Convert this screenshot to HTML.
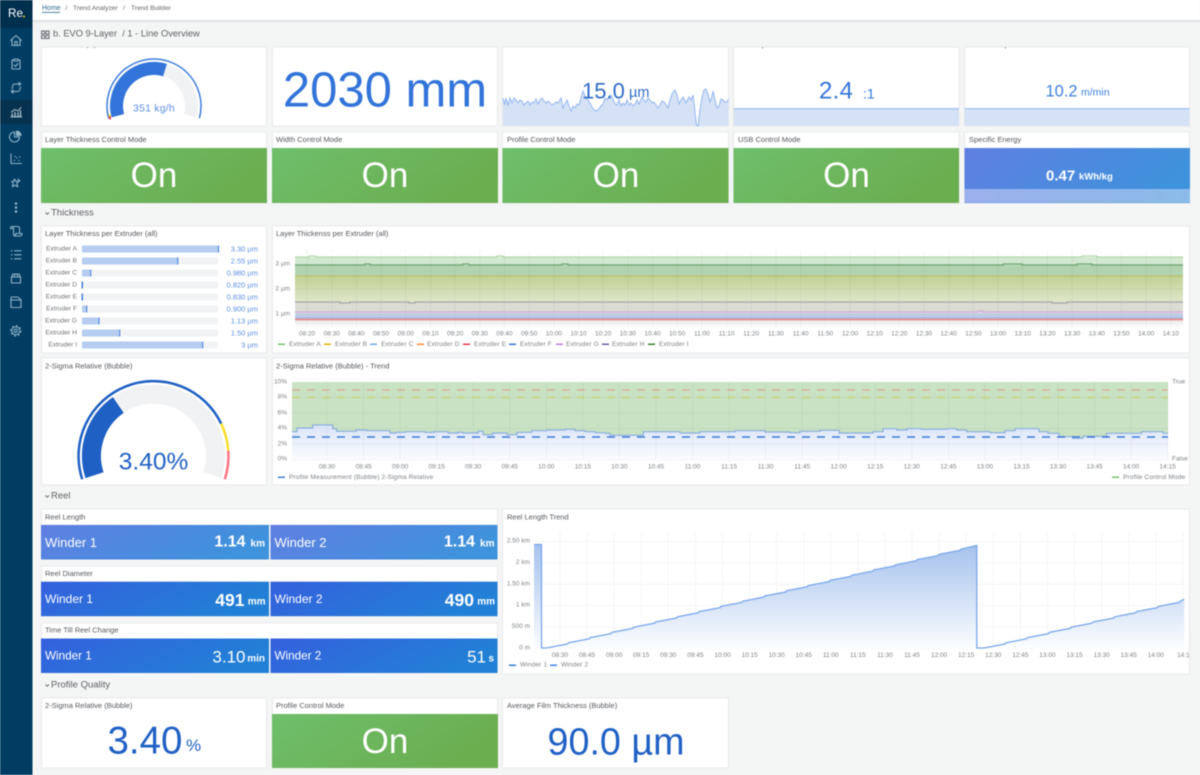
<!DOCTYPE html>
<html><head><meta charset="utf-8"><title>EVO 9-Layer</title>
<style>
html,body{margin:0;padding:0;width:1200px;height:775px;overflow:hidden;background:#f4f5f5}
svg{display:block;filter:blur(.4px)}
text{font-family:"Liberation Sans",sans-serif;dominant-baseline:central}
.t{font-size:7.5px;fill:#55585d}
.h{font-size:9.5px;fill:#5f6266}
.a{font-size:6.5px;fill:#7d8186}
.m{text-anchor:middle}.e{text-anchor:end}
.l{font-size:6.5px;fill:#7d8186;letter-spacing:.15px}
.on{font-size:35px;fill:#fff;text-anchor:middle}
.bl{font-size:6.5px;fill:#6d7075;text-anchor:end;letter-spacing:.05px}
.bv{font-size:7.5px;fill:#5b8fe2;text-anchor:end}
.p{fill:#fff;stroke:#e8eaec;stroke-width:1}
.ic{fill:none;stroke:#8db2c8;stroke-width:1.1;stroke-linecap:round;stroke-linejoin:round}
.w{fill:#fff;font-size:13px}.v{fill:#fff;font-size:17px;font-weight:bold}.u{fill:#fff;font-size:10px;font-weight:bold}
.g{stroke:rgba(0,0,0,.05);stroke-width:.8;fill:none}
</style></head>
<body>
<svg width="1200" height="775" viewBox="0 0 1200 775" xmlns="http://www.w3.org/2000/svg">
<defs>
<linearGradient id="gr" x1="0" y1="0" x2="1" y2=".35"><stop offset="0" stop-color="#6fbf6c"/><stop offset="1" stop-color="#6bae50"/></linearGradient>
<linearGradient id="b1" x1="0" y1="0" x2="1" y2=".3"><stop offset="0" stop-color="#5f7fe2"/><stop offset="1" stop-color="#3f92dc"/></linearGradient>
<linearGradient id="b2" x1="0" y1="0" x2="1" y2=".3"><stop offset="0" stop-color="#3560de"/><stop offset="1" stop-color="#2280d6"/></linearGradient>
<linearGradient id="se" x1="0" y1="0" x2="1" y2="0"><stop offset="0" stop-color="#9cb0ec"/><stop offset="1" stop-color="#8bbbe9"/></linearGradient>
<linearGradient id="c3" gradientUnits="userSpaceOnUse" x1="0" y1="276" x2="0" y2="302"><stop offset="0" stop-color="#c0d196"/><stop offset="1" stop-color="#dfe6c9"/></linearGradient>
<linearGradient id="c5" gradientUnits="userSpaceOnUse" x1="0" y1="319" x2="0" y2="328"><stop offset="0" stop-color="#e6e6e6"/><stop offset="1" stop-color="#fff"/></linearGradient>
<linearGradient id="t2" gradientUnits="userSpaceOnUse" x1="0" y1="430" x2="0" y2="460"><stop offset="0" stop-color="#dfe8f9"/><stop offset="1" stop-color="#fbfcfe"/></linearGradient>
<linearGradient id="t3" gradientUnits="userSpaceOnUse" x1="0" y1="544" x2="0" y2="648"><stop offset="0" stop-color="#a5c1ec"/><stop offset="1" stop-color="#fbfdff"/></linearGradient>
</defs>

<!-- background -->
<rect width="1200" height="775" fill="#f4f5f5"/>
<rect width="1200" height="20" fill="#fff"/>
<rect y="20" width="1200" height="2" fill="#dfe2e6"/>
<text x="42" y="8.500" font-size="7px" fill="#2d6b8c">Home</text>
<rect x="42" y="12" width="18" height=".8" fill="#2d6b8c"/>
<text x="65.500" y="8.500" font-size="6.700px" fill="#666">/</text>
<text x="73" y="8.500" font-size="6.700px" fill="#666">Trend Analyzer</text>
<text x="123" y="8.500" font-size="6.700px" fill="#666">/</text>
<text x="131" y="8.500" font-size="6.700px" fill="#666">Trend Builder</text>

<g fill="none" stroke="#66696e" stroke-width="1"><rect x="41.500" y="31" width="3" height="3"/><rect x="46" y="31" width="3" height="3"/><rect x="41.500" y="35.500" width="3" height="3"/><rect x="46" y="35.500" width="3" height="3"/></g>
<text x="53" y="33.500" style="font-size:9.300px;fill:#5f6266;white-space:pre">b. EVO 9-Layer  / 1 - Line Overview</text>

<!-- sidebar -->
<rect width="32.500" height="775" fill="#013d62"/>
<rect width="32.500" height="28" fill="#012f4e"/>
<rect y="100" width="32.500" height="24" fill="#07324f"/>
<text x="8" y="13" font-size="12px" fill="#fff" textLength="15" lengthAdjust="spacingAndGlyphs">Re</text>
<circle cx="24" cy="16.500" r="1" fill="#f2c230"/>
<!-- home -->
<path class="ic" d="M10.500 40.500 16 35.500 21.500 40.500M12 39.500V45.500H20V39.500M14.800 45.500V41.500H17.200V45.500"/>
<!-- clipboard check -->
<path class="ic" d="M14 60H12V69H20V60H18M14 59H18V61H14ZM14 65 15.500 66.500 18 63.500"/>
<!-- sync -->
<path class="ic" d="M12 88.500 12.800 85.500Q13.300 84 15 84H20.500M18.800 82.500 20.800 84 19 85.500M20.500 87 19.700 90Q19.200 91.500 17.500 91.500H11.500M13.300 90 11.300 91.500 13.300 93"/>
<!-- chart active -->
<path class="ic" style="stroke:#9db6c6;stroke-width:1.400" d="M11 116.800H21.500M12.200 116V114M15 116V112.500M18 116V113M20.500 116V111"/>
<path class="ic" style="stroke:#9db6c6" d="M11.500 112 15 109.500 18 111 21 107.500"/>
<!-- pie -->
<path class="ic" d="M14.500 132A5 5 0 1 0 19.500 137H14.500Z"/>
<path class="ic" style="fill:#8db2c8" d="M16.500 131A4.500 4.500 0 0 1 21 135.500H16.500Z"/>
<!-- scatter -->
<path class="ic" d="M11 154V163.500H21.500M14 160.500H14.500M16.500 158H17M18.500 160.500H19M15 156.500H15.500M19.500 157H20"/>
<!-- star -->
<path class="ic" d="M14.500 179 15.700 181.200H19L16.800 183.200 17.800 186.800 14.500 185 12.500 186.800 13 183.200 11.800 181.500H13.500ZM18 179 20 181"/>
<!-- dots -->
<g fill="#8db2c8"><circle cx="16" cy="203.500" r="1.300"/><circle cx="16" cy="207.500" r="1.300"/><circle cx="16" cy="211.500" r="1.300"/></g>
<!-- scroll -->
<path class="ic" d="M13 226.500H18Q19.500 226.500 19.500 228V232.500M10.500 228.500Q10.500 226.500 12 226.500Q13.500 226.500 13.500 228V234Q13.500 236 15.500 236H20Q22 236 22 233.500H15.500V234.500Q15.500 236 14 236M10.500 228.500H13.500"/>
<!-- list -->
<path class="ic" d="M14.500 250.800H21M14.500 254.800H21M14.500 258.800H21M11.300 250.800H12M11.300 254.800H12M11.300 258.800H12"/>
<!-- box -->
<path class="ic" d="M11.500 277V283H20.500V277M11.500 277 13 274H19L20.500 277ZM14.500 274V277M17.500 274V277"/>
<!-- folder -->
<path class="ic" d="M11 300V307.500H21V300ZM11 300V298Q11 297 12 297H18L21 300"/>
<!-- gear -->
<circle class="ic" cx="15.800" cy="330.800" r="4"/>
<circle cx="15.800" cy="330.800" r="5.200" fill="none" stroke="#8db2c8" stroke-width="1.200" stroke-dasharray="1.600 2.484"/>
<circle class="ic" cx="15.800" cy="330.800" r="1.600"/>

<!-- ROW 1 -->
<rect class="p" x="41.500" y="47" width="225" height="79"/>
<rect class="p" x="272.500" y="47" width="225" height="79"/>
<rect class="p" x="502.500" y="47" width="226" height="79"/>
<rect class="p" x="733.500" y="47" width="225.500" height="79"/>
<rect class="p" x="964.500" y="47" width="225" height="79"/>
<rect x="87" y="47" width="1" height="1" fill="#888"/><rect x="94" y="47" width="1" height="1" fill="#888"/>
<rect x="762" y="47" width="1" height="1.500" fill="#888"/><rect x="1005" y="47" width="1" height="1.500" fill="#888"/>

<!-- gauge 1 -->
<path d="M117.800 115.700A37.500 37.500 0 1 1 190.200 115.700" fill="none" stroke="#f1f2f3" stroke-width="13"/>
<path d="M117.800 115.700A37.500 37.500 0 0 1 165 70.100" fill="none" stroke="#3274d9" stroke-width="13"/>
<path d="M108.600 118.200A47 47 0 1 1 199.400 118.200" fill="none" stroke="#3e7ddc" stroke-width="1.500"/>
<rect x="108.500" y="114.500" width="2" height="2" fill="#f2cc0c"/><rect x="109" y="116.500" width="2" height="3" fill="#e8485a"/>
<text x="154" y="108.500" class="m" font-size="10.500px" fill="#5b8ee6" style="letter-spacing:.2px">351 kg/h</text>

<text x="385" y="90.500" class="m" font-size="49px" fill="#3274d9">2030 mm</text>

<!-- sparkline -->
<path d="M503 98 504.500 105 506 98 508 105 510 98 512 103 514 98 516 100 518 103 520 100 522 101 524 105 526 103 528 101 530 105 532 102 534 103 536 99 538 104 540 100 542 98 544 101 546 103 548 101 550 103 552 105 554 104 556 102 558 103 561 98 563 108 565 104 567 100 569 106 571 111 573 106 575 108 577 104 579 105 583 91 585 96 588 100 590 103 592 107 594 110 596 111 598 110 601 106 603 104 605 98 607 100 609 96 611 95 613 99 615 104 617 105 619 100 621 106 623 103 625 105 627 100 629 105 631 103 633 106 635 104 637 100 639 104 642 97 644 100 646 102 648 98 650 100 652 103 654 102 656 105 658 108 660 105 662 101 665 103 668 108 670 100 672 94 675 90 677 95 679 104 681 100 683 97 686 103 689 97 691 100 693 95 695 112 696.500 125 698 126 700 110 702 98 704 90 706 89 708 94 710 102 711.500 98 713 91 715 100 717 108 719 106 721 99 723 100 725 102 727 102 728.500 99V126H503Z" fill="#d5e2f5" stroke="none"/>
<path d="M503 98 504.500 105 506 98 508 105 510 98 512 103 514 98 516 100 518 103 520 100 522 101 524 105 526 103 528 101 530 105 532 102 534 103 536 99 538 104 540 100 542 98 544 101 546 103 548 101 550 103 552 105 554 104 556 102 558 103 561 98 563 108 565 104 567 100 569 106 571 111 573 106 575 108 577 104 579 105 583 91 585 96 588 100 590 103 592 107 594 110 596 111 598 110 601 106 603 104 605 98 607 100 609 96 611 95 613 99 615 104 617 105 619 100 621 106 623 103 625 105 627 100 629 105 631 103 633 106 635 104 637 100 639 104 642 97 644 100 646 102 648 98 650 100 652 103 654 102 656 105 658 108 660 105 662 101 665 103 668 108 670 100 672 94 675 90 677 95 679 104 681 100 683 97 686 103 689 97 691 100 693 95 695 112 696.500 125 698 126 700 110 702 98 704 90 706 89 708 94 710 102 711.500 98 713 91 715 100 717 108 719 106 721 99 723 100 725 102 727 102 728.500 99" fill="none" stroke="#94b6ee" stroke-width="1"/>
<text x="582" y="91" font-size="22px" fill="#2f6bc8">15.0</text><text x="629" y="93" font-size="14.500px" fill="#2f6bc8">µm</text>

<rect x="734" y="108" width="225" height="18" fill="#d5e2f5"/><rect x="734" y="108" width="225" height="1.500" fill="#aac4ee"/>
<text x="819" y="91" font-size="24px" fill="#3274d9" style="letter-spacing:.3px">2.4</text><text x="863" y="93.500" font-size="14px" fill="#3274d9">:1</text>
<rect x="964.500" y="108" width="225" height="18" fill="#d5e2f5"/><rect x="964.500" y="108" width="225" height="1.500" fill="#aac4ee"/>
<text x="1045.500" y="91.500" font-size="16.500px" fill="#3f7fdf">10.2</text><text x="1081" y="92.500" font-size="10.500px" fill="#3f7fdf">m/min</text>

<!-- ROW 2 -->
<rect class="p" x="41.500" y="132" width="225" height="71"/><text x="45" y="139.500" class="t">Layer Thickness Control Mode</text>
<rect x="41" y="148" width="226" height="55" fill="url(#gr)"/><text x="154" y="175.500" class="on">On</text>
<rect class="p" x="272.500" y="132" width="225" height="71"/><text x="276" y="139.500" class="t">Width Control Mode</text>
<rect x="272" y="148" width="226" height="55" fill="url(#gr)"/><text x="385" y="175.500" class="on">On</text>
<rect class="p" x="502.500" y="132" width="226" height="71"/><text x="507" y="139.500" class="t">Profile Control Mode</text>
<rect x="502.500" y="148" width="226" height="55" fill="url(#gr)"/><text x="616" y="175.500" class="on">On</text>
<rect class="p" x="733.500" y="132" width="225.500" height="71"/><text x="738" y="139.500" class="t">USB Control Mode</text>
<rect x="733.500" y="148" width="225.500" height="55" fill="url(#gr)"/><text x="846.500" y="175.500" class="on">On</text>
<rect class="p" x="964.500" y="132" width="225" height="71"/><text x="969" y="139.500" class="t">Specific Energy</text>
<rect x="964.500" y="148" width="225.500" height="55" fill="url(#b1)"/>
<rect x="964.500" y="189" width="225.500" height="13.500" fill="url(#se)"/>
<text x="1046" y="176" font-size="15px" font-weight="bold" fill="#fff">0.47</text><text x="1079" y="177" font-size="9.500px" font-weight="bold" fill="#fff">kWh/kg</text>

<!-- Thickness header -->
<path d="M45.500 212.500 47.200 214.200 49 212.500" fill="none" stroke="#666" stroke-width=".9"/>
<text x="51" y="213" class="h">Thickness</text>

<!-- ROW 3 -->
<rect class="p" x="41.500" y="226" width="225" height="127"/>
<text x="45" y="233.500" class="t">Layer Thickness per Extruder (all)</text>
<g fill="#f2f3f4">
<rect x="82" y="245.500" width="136" height="7"/><rect x="82" y="257.500" width="136" height="7"/><rect x="82" y="269.500" width="136" height="7"/><rect x="82" y="281.500" width="136" height="7"/><rect x="82" y="293.500" width="136" height="7"/><rect x="82" y="305.500" width="136" height="7"/><rect x="82" y="317.500" width="136" height="7"/><rect x="82" y="329.500" width="136" height="7"/><rect x="82" y="341.500" width="136" height="7"/>
</g>
<g fill="#b6cdf1">
<rect x="82" y="245.500" width="136.500" height="7"/><rect x="82" y="257.500" width="95.700" height="7"/><rect x="82" y="269.500" width="8.700" height="7"/><rect x="82" y="281.500" width="1" height="7"/><rect x="82" y="293.500" width="1" height="7"/><rect x="82" y="305.500" width="4.700" height="7"/><rect x="82" y="317.500" width="17" height="7"/><rect x="82" y="329.500" width="37.700" height="7"/><rect x="82" y="341.500" width="120.700" height="7"/>
</g>
<g fill="#3e7edd">
<rect x="218" y="245.500" width="1" height="7"/><rect x="177.300" y="257.500" width="1" height="7"/><rect x="90.200" y="269.500" width="1" height="7"/><rect x="81.500" y="281.500" width="1.500" height="7"/><rect x="81.500" y="293.500" width="1.500" height="7"/><rect x="86.200" y="305.500" width="1" height="7"/><rect x="98.500" y="317.500" width="1" height="7"/><rect x="119.200" y="329.500" width="1" height="7"/><rect x="202.200" y="341.500" width="1" height="7"/>
</g>
<text x="77" y="249" class="bl">Extruder A</text><text x="258" y="249" class="bv">3.30 µm</text>
<text x="77" y="261" class="bl">Extruder B</text><text x="258" y="261" class="bv">2.55 µm</text>
<text x="77" y="273" class="bl">Extruder C</text><text x="258" y="273" class="bv">0.980 µm</text>
<text x="77" y="285" class="bl">Extruder D</text><text x="258" y="285" class="bv">0.820 µm</text>
<text x="77" y="297" class="bl">Extruder E</text><text x="258" y="297" class="bv">0.830 µm</text>
<text x="77" y="309" class="bl">Extruder F</text><text x="258" y="309" class="bv">0.900 µm</text>
<text x="77" y="321" class="bl">Extruder G</text><text x="258" y="321" class="bv">1.13 µm</text>
<text x="77" y="333" class="bl">Extruder H</text><text x="258" y="333" class="bv">1.50 µm</text>
<text x="77" y="345" class="bl">Extruder I</text><text x="258" y="345" class="bv">3 µm</text>

<rect class="p" x="272.500" y="226" width="917" height="127"/>
<text x="276" y="233.500" class="t">Layer Thickenss per Extruder (all)</text>
<rect x="295" y="257" width="888" height="8" fill="#d3e8d0"/>
<rect x="295" y="265" width="888" height="11" fill="#b1d3b0"/>
<rect x="295" y="276" width="888" height="26" fill="url(#c3)"/>
<rect x="295" y="302" width="888" height="10" fill="#dbdcd4"/>
<rect x="295" y="312" width="888" height="3" fill="#d8d6e2"/>
<rect x="295" y="314.500" width="888" height="4.500" fill="#a9c2e4"/>
<rect x="295" y="319" width="888" height="9" fill="url(#c5)"/>
<path class="g" d="M307 250V328M331.700 250V328M356.400 250V328M381 250V328M405.700 250V328M430.400 250V328M455.100 250V328M479.800 250V328M504.400 250V328M529.100 250V328M553.800 250V328M578.500 250V328M603.200 250V328M627.800 250V328M652.500 250V328M677.200 250V328M701.900 250V328M726.600 250V328M751.200 250V328M775.900 250V328M800.600 250V328M825.300 250V328M850 250V328M874.600 250V328M899.300 250V328M924 250V328M948.700 250V328M973.400 250V328M998 250V328M1022.700 250V328M1047.400 250V328M1072.100 250V328M1096.800 250V328M1121.400 250V328M1146.100 250V328M1170.800 250V328M295 264H1183M295 289H1183M295 314H1183"/>
<g fill="none" stroke-width="1">
<path stroke="#a6d3a0" d="M295 257H309V256H316V257H497V256H503V257H1082V256H1097V257H1183"/>
<path stroke="#6fa672" stroke-width="1.200" d="M295 265H365V264H370V265H463V264H469V265H562V264H568V265H1003V264H1022V265H1077V264H1092V265H1183"/>
<path stroke="#c0bc62" d="M295 276H1183"/>
<path stroke="#a5a5a8" stroke-width="1.200" d="M295 302H340V303H350V302H409V303H415V302H1052V303H1067V302H1183"/>
<path stroke="#cfaeda" stroke-width="1.200" d="M295 312H978V311H983V312H1183"/>
<path stroke="#c7d6ef" stroke-width="1.200" d="M295 316H1183"/>
<path stroke="#ef7f78" stroke-width="1.400" d="M295 319.500H1183"/>
</g>
<g class="a">
<text x="290" y="264" class="a e">3 µm</text><text x="290" y="289" class="a e">2 µm</text><text x="290" y="314" class="a e">1 µm</text>
<text x="307" y="334" class="a m">08:20</text><text x="331.700" y="334" class="a m">08:30</text><text x="356.400" y="334" class="a m">08:40</text><text x="381" y="334" class="a m">08:50</text><text x="405.700" y="334" class="a m">09:00</text><text x="430.400" y="334" class="a m">09:10</text><text x="455.100" y="334" class="a m">09:20</text><text x="479.800" y="334" class="a m">09:30</text><text x="504.400" y="334" class="a m">09:40</text><text x="529.100" y="334" class="a m">09:50</text><text x="553.800" y="334" class="a m">10:00</text><text x="578.500" y="334" class="a m">10:10</text><text x="603.200" y="334" class="a m">10:20</text><text x="627.800" y="334" class="a m">10:30</text><text x="652.500" y="334" class="a m">10:40</text><text x="677.200" y="334" class="a m">10:50</text><text x="701.900" y="334" class="a m">11:00</text><text x="726.600" y="334" class="a m">11:10</text><text x="751.200" y="334" class="a m">11:20</text><text x="775.900" y="334" class="a m">11:30</text><text x="800.600" y="334" class="a m">11:40</text><text x="825.300" y="334" class="a m">11:50</text><text x="850" y="334" class="a m">12:00</text><text x="874.600" y="334" class="a m">12:10</text><text x="899.300" y="334" class="a m">12:20</text><text x="924" y="334" class="a m">12:30</text><text x="948.700" y="334" class="a m">12:40</text><text x="973.400" y="334" class="a m">12:50</text><text x="998" y="334" class="a m">13:00</text><text x="1022.700" y="334" class="a m">13:10</text><text x="1047.400" y="334" class="a m">13:20</text><text x="1072.100" y="334" class="a m">13:30</text><text x="1096.800" y="334" class="a m">13:40</text><text x="1121.400" y="334" class="a m">13:50</text><text x="1146.100" y="334" class="a m">14:00</text><text x="1170.800" y="334" class="a m">14:10</text>
</g>
<rect x="278" y="343.500" width="7" height="1.500" fill="#73bf69"/><text x="289" y="344.500" class="l">Extruder A</text>
<rect x="324" y="343.500" width="7" height="1.500" fill="#e0b400"/><text x="335" y="344.500" class="l">Extruder B</text>
<rect x="370" y="343.500" width="7" height="1.500" fill="#6ea6f0"/><text x="381" y="344.500" class="l">Extruder C</text>
<rect x="417" y="343.500" width="7" height="1.500" fill="#ff8833"/><text x="427" y="344.500" class="l">Extruder D</text>
<rect x="463" y="343.500" width="7" height="1.500" fill="#e8384f"/><text x="474" y="344.500" class="l">Extruder E</text>
<rect x="509" y="343.500" width="7" height="1.500" fill="#3274d9"/><text x="520" y="344.500" class="l">Extruder F</text>
<rect x="556" y="343.500" width="7" height="1.500" fill="#b877d9"/><text x="566" y="344.500" class="l">Extruder G</text>
<rect x="602" y="343.500" width="7" height="1.500" fill="#705da0"/><text x="612" y="344.500" class="l">Extruder H</text>
<rect x="648" y="343.500" width="7" height="1.500" fill="#37872d"/><text x="659" y="344.500" class="l">Extruder I</text>

<!-- ROW 4 -->
<rect class="p" x="41.500" y="358" width="225" height="127"/>
<text x="45" y="366" class="t">2-Sigma Relative (Bubble)</text>
<path d="M94.500 475.200A62 62 0 1 1 212.500 475.200" fill="none" stroke="#f1f2f3" stroke-width="19"/>
<path d="M94.500 475.200A62 62 0 0 1 118.300 405" fill="none" stroke="#1f60c4" stroke-width="19"/>
<path d="M82.200 479.200A75 75 0 0 1 221.200 423.700" fill="none" stroke="#1f60c4" stroke-width="2.500"/>
<path d="M221.200 423.700A75 75 0 0 1 228.300 450.800" fill="none" stroke="#fade2a" stroke-width="2.500"/>
<path d="M228.300 450.800A75 75 0 0 1 224.800 479.200" fill="none" stroke="#ff7383" stroke-width="2.500"/>
<text x="153.500" y="462" class="m" font-size="24.500px" fill="#1f60c4">3.40%</text>

<rect class="p" x="272.500" y="358" width="917" height="127"/>
<text x="276" y="366" class="t">2-Sigma Relative (Bubble) - Trend</text>
<rect x="292" y="382" width="876" height="55" fill="#c9e2c4"/>
<rect x="292" y="425" width="876" height="35" fill="url(#t2)"/>
<path d="M292 382V431.700H297V428H312.700V425H332.700V428.700H336.700V431.300H356V430H366.700V430.700H390V433H396V432.300H405V431.700H425V432.300H434V431.700H448V433H458V432.300H463V433H478V431.300H483V434.700H492.700V433H507V434.700H517V432.300H531.700V430.700H546.700V430H565V429.300H575V430.700H585V431.700H595V432.700H605V433.300H610V435.300H643.300V431.700H680V433H700V431.700H735V430.700H765V432H790V432.700H800V431.300H820V430.300H839.300V433H873V431.700H883V428.700H896.700V430H907V428.700H921.700V429.300H946.700V428.700H956.700V430H966.700V431.700H990V432.700H1005V430.700H1015V428.700H1039V431.700H1048V433.300H1059V436.700H1072.700V438.300H1083V436.300H1106.700V433.300H1141.700V431.700H1163V433.300H1168V382Z" fill="#c9e2c4"/>
<path class="g" d="M327 382V460M363.600 382V460M400.100 382V460M436.700 382V460M473.200 382V460M509.800 382V460M546.300 382V460M582.900 382V460M619.400 382V460M656 382V460M692.500 382V460M729.100 382V460M765.600 382V460M802.200 382V460M838.700 382V460M875.300 382V460M911.800 382V460M948.400 382V460M984.900 382V460M1021.500 382V460M1058 382V460M1094.600 382V460M1131.100 382V460M1167.700 382V460M292 397.500H1168M292 413H1168M292 428.500H1168M292 444H1168M292 460H1168"/>
<path d="M292 431.700H297V428H312.700V425H332.700V428.700H336.700V431.300H356V430H366.700V430.700H390V433H396V432.300H405V431.700H425V432.300H434V431.700H448V433H458V432.300H463V433H478V431.300H483V434.700H492.700V433H507V434.700H517V432.300H531.700V430.700H546.700V430H565V429.300H575V430.700H585V431.700H595V432.700H605V433.300H610V435.300H643.300V431.700H680V433H700V431.700H735V430.700H765V432H790V432.700H800V431.300H820V430.300H839.300V433H873V431.700H883V428.700H896.700V430H907V428.700H921.700V429.300H946.700V428.700H956.700V430H966.700V431.700H990V432.700H1005V430.700H1015V428.700H1039V431.700H1048V433.300H1059V436.700H1072.700V438.300H1083V436.300H1106.700V433.300H1141.700V431.700H1163V433.300H1168" fill="none" stroke="#8aadde" stroke-width="1.200"/>
<path d="M292 390H1168" stroke="#dba88e" stroke-width="1.300" stroke-dasharray="8 7"/>
<path d="M292 397.500H1168" stroke="#c9d06e" stroke-width="1.300" stroke-dasharray="8 7"/>
<path d="M292 437H1168" stroke="#3f7bd6" stroke-width="1.600" stroke-dasharray="8 7"/>
<text x="287" y="382" class="a e">10%</text><text x="287" y="397" class="a e">8%</text><text x="287" y="413" class="a e">6%</text><text x="287" y="428" class="a e">4%</text><text x="287" y="444" class="a e">2%</text><text x="287" y="459" class="a e">0%</text>
<text x="1172" y="382" class="a">True</text><text x="1172" y="459" class="a">False</text>
<text x="327" y="467" class="a m">08:30</text><text x="363.600" y="467" class="a m">08:45</text><text x="400.100" y="467" class="a m">09:00</text><text x="436.700" y="467" class="a m">09:15</text><text x="473.200" y="467" class="a m">09:30</text><text x="509.800" y="467" class="a m">09:45</text><text x="546.300" y="467" class="a m">10:00</text><text x="582.900" y="467" class="a m">10:15</text><text x="619.400" y="467" class="a m">10:30</text><text x="656" y="467" class="a m">10:45</text><text x="692.500" y="467" class="a m">11:00</text><text x="729.100" y="467" class="a m">11:15</text><text x="765.600" y="467" class="a m">11:30</text><text x="802.200" y="467" class="a m">11:45</text><text x="838.700" y="467" class="a m">12:00</text><text x="875.300" y="467" class="a m">12:15</text><text x="911.800" y="467" class="a m">12:30</text><text x="948.400" y="467" class="a m">12:45</text><text x="984.900" y="467" class="a m">13:00</text><text x="1021.500" y="467" class="a m">13:15</text><text x="1058" y="467" class="a m">13:30</text><text x="1094.600" y="467" class="a m">13:45</text><text x="1131.100" y="467" class="a m">14:00</text><text x="1167.700" y="467" class="a m">14:15</text>
<rect x="278" y="476.500" width="7" height="1.500" fill="#3f7bd6"/><text x="289" y="477.500" class="l">Profile Measurement (Bubble) 2-Sigma Relative</text>
<rect x="1112" y="476.500" width="7" height="1.500" fill="#73bf69"/><text x="1123" y="477.500" class="l">Profile Control Mode</text>

<!-- Reel header -->
<path d="M45.500 495.500 47.200 497.200 49 495.500" fill="none" stroke="#666" stroke-width=".9"/>
<text x="51" y="496" class="h">Reel</text>

<!-- Reel tiles -->
<rect class="p" x="41.500" y="509" width="456" height="16"/><text x="45" y="517" class="t">Reel Length</text>
<rect x="41" y="525" width="228" height="34.500" fill="url(#b1)"/><rect x="270.500" y="525" width="227" height="34.500" fill="url(#b1)"/>
<text x="45" y="542.500" class="w">Winder 1</text><text x="274.500" y="542.500" class="w">Winder 2</text>
<text x="245.500" y="542" class="v e" style="font-size:16px">1.14</text><text x="265" y="544" class="u e">km</text>
<text x="475" y="542" class="v e" style="font-size:16px">1.14</text><text x="494.500" y="544" class="u e">km</text>

<rect class="p" x="41.500" y="566" width="456" height="16"/><text x="45" y="573.500" class="t">Reel Diameter</text>
<rect x="41" y="581.700" width="228" height="34.500" fill="url(#b2)"/><rect x="270.500" y="581.700" width="227" height="34.500" fill="url(#b2)"/>
<text x="45" y="599" class="w" style="font-size:12px">Winder 1</text><text x="274.500" y="599" class="w" style="font-size:12px">Winder 2</text>
<text x="244.500" y="600" class="v e" style="font-size:17.500px">491</text><text x="265.500" y="602" class="u e">mm</text>
<text x="474" y="600" class="v e" style="font-size:17.500px">490</text><text x="495" y="602" class="u e">mm</text>

<rect class="p" x="41.500" y="623" width="456" height="16"/><text x="45" y="630" class="t">Time Till Reel Change</text>
<rect x="41" y="638.500" width="228" height="34.500" fill="url(#b2)"/><rect x="270.500" y="638.500" width="227" height="34.500" fill="url(#b2)"/>
<text x="45" y="656" class="w" style="font-size:11.700px">Winder 1</text><text x="274.500" y="656" class="w" style="font-size:11.700px">Winder 2</text>
<text x="245.500" y="657" class="v e" style="font-weight:normal">3.10</text><text x="265" y="659" class="u e">min</text>
<text x="486" y="657" class="v e" style="font-weight:normal">51</text><text x="494" y="659" class="u e">s</text>

<!-- Reel trend -->
<rect class="p" x="502.500" y="509" width="687" height="165"/>
<text x="507" y="517" class="t">Reel Length Trend</text>
<path class="g" d="M560 533V648M587 533V648M614.200 533V648M641.200 533V648M668.300 533V648M695.400 533V648M722.500 533V648M749.600 533V648M776.600 533V648M803.700 533V648M830.800 533V648M857.900 533V648M885 533V648M912 533V648M939.100 533V648M966.200 533V648M993.300 533V648M1020.400 533V648M1047.400 533V648M1074.500 533V648M1101.600 533V648M1128.700 533V648M1155.800 533V648M1183 533V648M533.500 541.500H1184M533.500 563H1184M533.500 584.300H1184M533.500 605.500H1184M533.500 627H1184M533.500 648H1184"/>
<path d="M534 648V544.500H541.500V648ZM542 648H546.600
l20.800-4l1-1.200 l20.800-4l1-1.200 l20.800-4l1-1.200 l20.800-4l1-1.200 l20.800-4l1-1.200
l20.800-4l1-1.200 l20.800-4l1-1.200 l20.800-4l1-1.200 l20.800-4l1-1.200 l20.800-4l1-1.200
l20.800-4l1-1.200 l20.800-4l1-1.200 l20.800-4l1-1.200 l20.800-4l1-1.200 l20.800-4l1-1.200
l20.800-4l1-1.200 l20.800-4l1-1.200 l20.800-4l1-1.200 l20.800-4l1-1.200
l16-3.800V648Z
M980 648h4
l20.800-4l1-1.200 l20.800-4l1-1.200 l20.800-4l1-1.200 l20.800-4l1-1.200 l20.800-4l1-1.200
l20.800-4l1-1.200 l20.800-4l1-1.200 l20.800-4l1-1.200 l20.800-4l1-1.200
l4-2V648Z" fill="url(#t3)"/>
<path d="M534 544.500H541.500V648H546.600
l20.800-4l1-1.200 l20.800-4l1-1.200 l20.800-4l1-1.200 l20.800-4l1-1.200 l20.800-4l1-1.200
l20.800-4l1-1.200 l20.800-4l1-1.200 l20.800-4l1-1.200 l20.800-4l1-1.200 l20.800-4l1-1.200
l20.800-4l1-1.200 l20.800-4l1-1.200 l20.800-4l1-1.200 l20.800-4l1-1.200 l20.800-4l1-1.200
l20.800-4l1-1.200 l20.800-4l1-1.200 l20.800-4l1-1.200 l20.800-4l1-1.200
l16-3.800V648H984
l20.800-4l1-1.200 l20.800-4l1-1.200 l20.800-4l1-1.200 l20.800-4l1-1.200 l20.800-4l1-1.200
l20.800-4l1-1.200 l20.800-4l1-1.200 l20.800-4l1-1.200 l20.800-4l1-1.200
l4-2" fill="none" stroke="#7ba7ec" stroke-width="1.300"/>
<text x="530" y="541" class="a e">2.50 km</text><text x="530" y="562.500" class="a e">2 km</text><text x="530" y="584" class="a e">1.50 km</text><text x="530" y="605" class="a e">1 km</text><text x="530" y="626.500" class="a e">500 m</text><text x="530" y="648" class="a e">0 m</text>
<text x="560" y="655.500" class="a m">08:30</text><text x="587" y="655.500" class="a m">08:45</text><text x="614.200" y="655.500" class="a m">09:00</text><text x="641.200" y="655.500" class="a m">09:15</text><text x="668.300" y="655.500" class="a m">09:30</text><text x="695.400" y="655.500" class="a m">09:45</text><text x="722.500" y="655.500" class="a m">10:00</text><text x="749.600" y="655.500" class="a m">10:15</text><text x="776.600" y="655.500" class="a m">10:30</text><text x="803.700" y="655.500" class="a m">10:45</text><text x="830.800" y="655.500" class="a m">11:00</text><text x="857.900" y="655.500" class="a m">11:15</text><text x="885" y="655.500" class="a m">11:30</text><text x="912" y="655.500" class="a m">11:45</text><text x="939.100" y="655.500" class="a m">12:00</text><text x="966.200" y="655.500" class="a m">12:15</text><text x="993.300" y="655.500" class="a m">12:30</text><text x="1020.400" y="655.500" class="a m">12:45</text><text x="1047.400" y="655.500" class="a m">13:00</text><text x="1074.500" y="655.500" class="a m">13:15</text><text x="1101.600" y="655.500" class="a m">13:30</text><text x="1128.700" y="655.500" class="a m">13:45</text><text x="1155.800" y="655.500" class="a m">14:00</text><text x="1177" y="655.500" class="a">14:1</text>
<rect x="509" y="664.500" width="7" height="1.500" fill="#3274d9"/><text x="520" y="665" class="l">Winder 1</text>
<rect x="550" y="664.500" width="7" height="1.500" fill="#3f84ee"/><text x="561" y="665" class="l">Winder 2</text>

<!-- Profile quality -->
<path d="M45.500 684.500 47.200 686.200 49 684.500" fill="none" stroke="#666" stroke-width=".9"/>
<text x="51" y="685" class="h">Profile Quality</text>

<rect class="p" x="41.500" y="698" width="225" height="70"/>
<text x="45" y="705.500" class="t">2-Sigma Relative (Bubble)</text>
<text x="107.500" y="741" font-size="38.500px" fill="#1f60c4">3.40</text><text x="186" y="745.500" font-size="17px" fill="#1f60c4">%</text>

<rect class="p" x="272.500" y="698" width="225" height="70"/>
<text x="276" y="705.500" class="t">Profile Control Mode</text>
<rect x="272" y="714" width="226" height="54" fill="url(#gr)"/><text x="385" y="741.500" class="on">On</text>

<rect class="p" x="502.500" y="698" width="226" height="70"/>
<text x="507" y="705.500" class="t">Average Film Thickness (Bubble)</text>
<text x="616" y="741.500" class="m" font-size="37.700px" fill="#1f60c4">90.0 µm</text>
</svg>
</body></html>
